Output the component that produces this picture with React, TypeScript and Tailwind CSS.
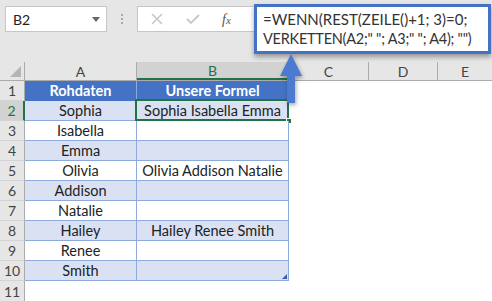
import React from "react";

const rows: { n: number; a: string; b: string }[] = [
  { n: 2, a: "Sophia", b: "Sophia Isabella Emma" },
  { n: 3, a: "Isabella", b: "" },
  { n: 4, a: "Emma", b: "" },
  { n: 5, a: "Olivia", b: "Olivia Addison Natalie" },
  { n: 6, a: "Addison", b: "" },
  { n: 7, a: "Natalie", b: "" },
  { n: 8, a: "Hailey", b: "Hailey Renee Smith" },
  { n: 9, a: "Renee", b: "" },
  { n: 10, a: "Smith", b: "" },
];

export default function App() {
  return (
    <div
      className="relative w-[492px] h-[301px] overflow-hidden bg-[#e6e6e6] text-[#222]"
      style={{ fontFamily: "Lato, 'Open Sans', sans-serif" }}
    >
      {/* Top bar */}
      <div className="flex h-[62px] items-start pt-[6px] pl-[5px]">
        <div className="flex h-[26px] w-[102px] items-center justify-between border border-[#c6c6c6] bg-white pl-[7px] pr-[6px]">
          <span className="text-[14px] text-[#222]">B2</span>
          <svg width="8" height="5" viewBox="0 0 8 5">
            <path d="M0 0 H8 L4 5 Z" fill="#666" />
          </svg>
        </div>
        <div className="flex h-[26px] w-[30px] flex-col items-center justify-center gap-[2px]">
          <span className="h-[2px] w-[2px] bg-[#aaa]" />
          <span className="h-[2px] w-[2px] bg-[#aaa]" />
          <span className="h-[2px] w-[2px] bg-[#aaa]" />
        </div>
        <div className="flex h-[26px] w-[150px] items-center border border-[#c6c6c6] bg-white pl-[12px]">
          <svg width="12" height="12" viewBox="0 0 12 12" className="ml-[1px]">
            <path d="M1 1 L11 11 M11 1 L1 11" stroke="#c8c8c8" strokeWidth="1.6" />
          </svg>
          <svg width="14" height="12" viewBox="0 0 14 12" className="ml-[23px]">
            <path d="M1 6 L5 10 L13 2" stroke="#c8c8c8" strokeWidth="1.8" fill="none" />
          </svg>
          <span
            className="ml-[22px] text-[14px] italic text-[#555]"
            style={{ fontFamily: "'Liberation Serif', serif" }}
          >
            f<span className="text-[11px]">x</span>
          </span>
        </div>
      </div>

      {/* Column header row */}
      <div className="flex h-[19px] border-b border-[#ababab] text-[14px] text-[#444]">
        <div className="relative w-[25px] border-r border-[#ababab]">
          <svg width="11" height="11" viewBox="0 0 11 11" className="absolute bottom-[3px] right-[3px]">
            <path d="M11 0 V11 H0 Z" fill="#b4b4b4" />
          </svg>
        </div>
        <div className="flex w-[112px] items-center justify-center border-r border-[#ababab]">A</div>
        <div className="flex w-[152px] items-center justify-center border-r border-[#ababab] border-b-2 border-b-[#217346] bg-[#d2d2d2] text-[#217346]">
          B
        </div>
        <div className="flex w-[80px] items-center justify-center border-r border-[#ababab]">C</div>
        <div className="flex w-[69px] items-center justify-center border-r border-[#ababab]">D</div>
        <div className="flex flex-1 items-center justify-center">E</div>
      </div>

      {/* Row 1 */}
      <div className="flex h-[20px] text-[14.5px]">
        <div className="flex w-[25px] items-center justify-center border-r border-b border-r-[#ababab] border-b-[#d4d4d4] bg-[#e6e6e6] text-[14px] text-[#444]">
          1
        </div>
        <div className="flex w-[112px] items-center justify-center border-r border-[#8ea9db] bg-[#4472c4] font-bold text-white">
          Rohdaten
        </div>
        <div className="flex w-[152px] items-center justify-center border-r border-[#8ea9db] bg-[#4472c4] font-bold text-white">
          Unsere Formel
        </div>
        <div className="flex-1 bg-white" />
      </div>

      {rows.map((r, i) => {
        const band = i % 2 === 0 ? "bg-[#d9e1f2]" : "bg-white";
        const sel = r.n === 2;
        return (
          <div key={r.n} className="flex h-[20px] text-[14.5px]">
            <div
              className={
                sel
                  ? "flex w-[25px] items-center justify-center border-b border-b-[#d4d4d4] border-r-2 border-r-[#217346] bg-[#d2d2d2] text-[14px] text-[#217346]"
                  : "flex w-[25px] items-center justify-center border-r border-b border-r-[#ababab] border-b-[#d4d4d4] bg-[#e6e6e6] text-[14px] text-[#444]"
              }
            >
              {r.n}
            </div>
            <div className={`flex w-[112px] items-center justify-center border-r border-b border-[#8ea9db] ${band}`}>
              {r.a}
            </div>
            <div className={`relative flex w-[152px] items-center justify-center border-r border-b border-[#8ea9db] ${band}`}>
              {r.b}
              {sel && (
                <>
                  <div className="absolute left-[-2px] top-[-2px] h-[22px] w-[154px] border-2 border-[#217346]" />
                  <div className="absolute bottom-[-4px] right-[-4px] h-[6px] w-[6px] border border-white bg-[#217346]" />
                </>
              )}
              {r.n === 10 && (
                <svg width="5" height="5" viewBox="0 0 5 5" className="absolute bottom-[1px] right-[1px]">
                  <path d="M5 0 V5 H0 Z" fill="#3b5bb5" />
                </svg>
              )}
            </div>
            <div className="flex-1 bg-white" />
          </div>
        );
      })}

      {/* Row 11 */}
      <div className="flex h-[20px]">
        <div className="flex w-[25px] items-center justify-center border-r border-[#ababab] bg-[#e6e6e6] text-[14px] text-[#444]">
          11
        </div>
        <div className="flex-1 bg-white" />
      </div>

      {/* Formula overlay */}
      <div className="absolute left-[254px] top-[4px] flex h-[50px] w-[237px] flex-col justify-center border-[3px] border-[#4472c4] bg-white pl-[6px] text-[15px] leading-[20px] text-[#333] shadow-[0_3px_5px_rgba(0,0,0,0.35)]">
        <div>=WENN(REST(ZEILE()+1; 3)=0;</div>
        <div className="whitespace-nowrap text-[14.5px] tracking-[-0.25px]">
          VERKETTEN(A2;" "; A3;" "; A4); "")
        </div>
      </div>

      {/* Arrow */}
      <svg
        width="26"
        height="52"
        viewBox="0 0 26 52"
        className="absolute left-[278px] top-[54px]"
        style={{ filter: "drop-shadow(1px 2px 2px rgba(0,0,0,0.35))" }}
      >
        <path d="M13 0 L24 22 H17 V49 H9 V22 H2 Z" fill="#4a7bd0" />
      </svg>
    </div>
  );
}
